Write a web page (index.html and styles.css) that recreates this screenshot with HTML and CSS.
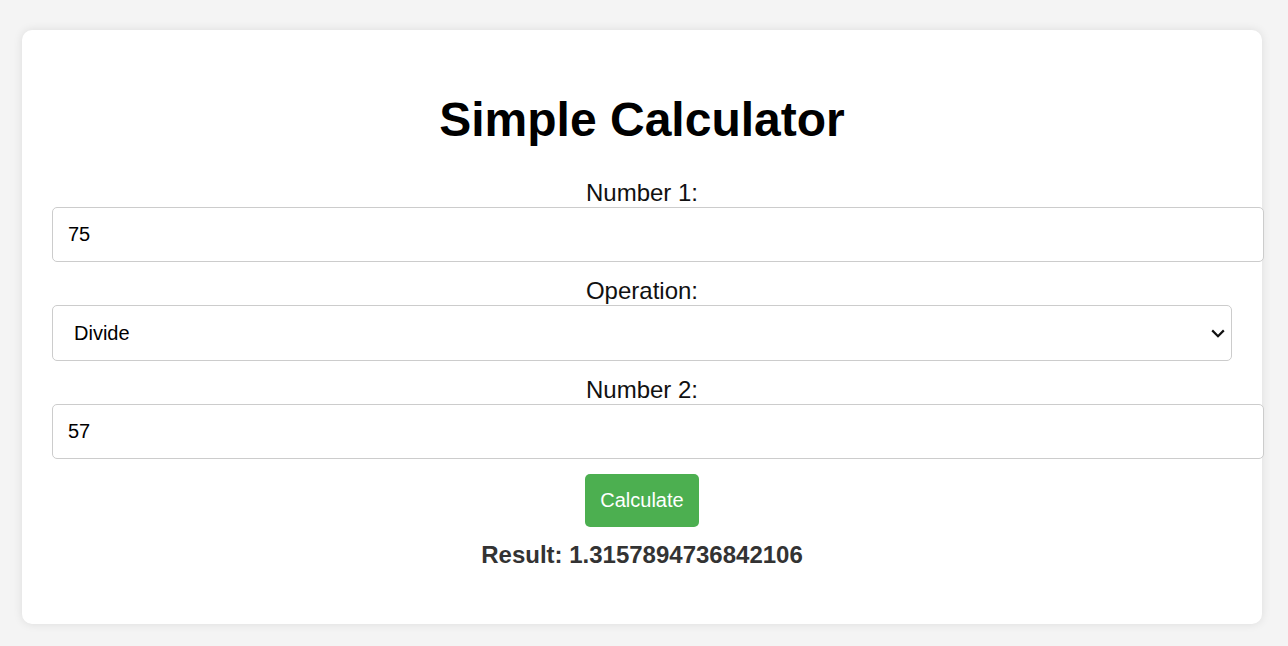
FILE: index.html
```html
<!DOCTYPE html>
<html lang="en">
<head>
<meta charset="utf-8">
<title>Simple Calculator</title>
<link rel="stylesheet" href="styles.css">
</head>
<body>
  <div class="card">
    <h1 class="title">Simple Calculator</h1>
    <form class="calc">
      <label class="field-label" for="n1">Number 1:</label>
      <input class="field" id="n1" type="number" value="75">
      <label class="field-label" for="op">Operation:</label>
      <div class="select-wrap">
        <select class="field select" id="op">
          <option>Add</option>
          <option>Subtract</option>
          <option>Multiply</option>
          <option selected>Divide</option>
        </select>
        <svg class="chevron" width="14" height="9" viewBox="0 0 14 9" aria-hidden="true">
          <path d="M1.2 1.4 L7 7.2 L12.8 1.4" fill="none" stroke="#111" stroke-width="2.2"/>
        </svg>
      </div>
      <label class="field-label" for="n2">Number 2:</label>
      <input class="field" id="n2" type="number" value="57">
      <div class="actions">
        <button class="btn" type="button">Calculate</button>
      </div>
    </form>
    <div class="result">Result: 1.3157894736842106</div>
  </div>
</body>
</html>
```

FILE: styles.css
```css
html, body {
  margin: 0;
}
body {
  background: #f4f4f4;
  font-family: "Liberation Sans", Arial, sans-serif;
  padding: 30px 0 22px 22px;
}
.card {
  width: 1180px;
  background: #ffffff;
  border-radius: 10px;
  box-shadow: 0 0 10px rgba(0, 0, 0, 0.1);
  padding: 30px 30px 55px;
  text-align: center;
}
.title {
  font-size: 48px;
  font-weight: bold;
  color: #000;
  margin: 32px 0 32px;
  line-height: normal;
}
.calc {
  margin: 0;
}
.field-label {
  display: block;
  font-size: 24px;
  color: #111;
  line-height: normal;
}
.field {
  display: block;
  width: 100%;
  padding: 15px;
  font-family: "Liberation Sans", Arial, sans-serif;
  font-size: 20px;
  border: 1px solid #ccc;
  border-radius: 5px;
  margin: 0 0 15px;
  background: #fff;
  color: #000;
  text-align: left;
  line-height: normal;
  -moz-appearance: textfield;
}
.field::-webkit-outer-spin-button,
.field::-webkit-inner-spin-button {
  -webkit-appearance: none;
  margin: 0;
}
.select-wrap {
  position: relative;
  margin: 0 0 15px;
}
.select {
  box-sizing: border-box;
  height: 56px;
  margin: 0;
  padding-left: 21px;
  -webkit-appearance: none;
  appearance: none;
}
.chevron {
  position: absolute;
  right: 7px;
  top: 24px;
  pointer-events: none;
}
.actions {
  margin: 0;
  line-height: 0;
}
.btn {
  background: #4CAF50;
  color: #fff;
  border: none;
  border-radius: 5px;
  font-family: "Liberation Sans", Arial, sans-serif;
  font-size: 20px;
  padding: 15px;
  line-height: 23px;
  height: 53px;
  cursor: pointer;
}
.result {
  margin-top: 14px;
  font-size: 24px;
  font-weight: bold;
  color: #333;
  line-height: normal;
}
```
